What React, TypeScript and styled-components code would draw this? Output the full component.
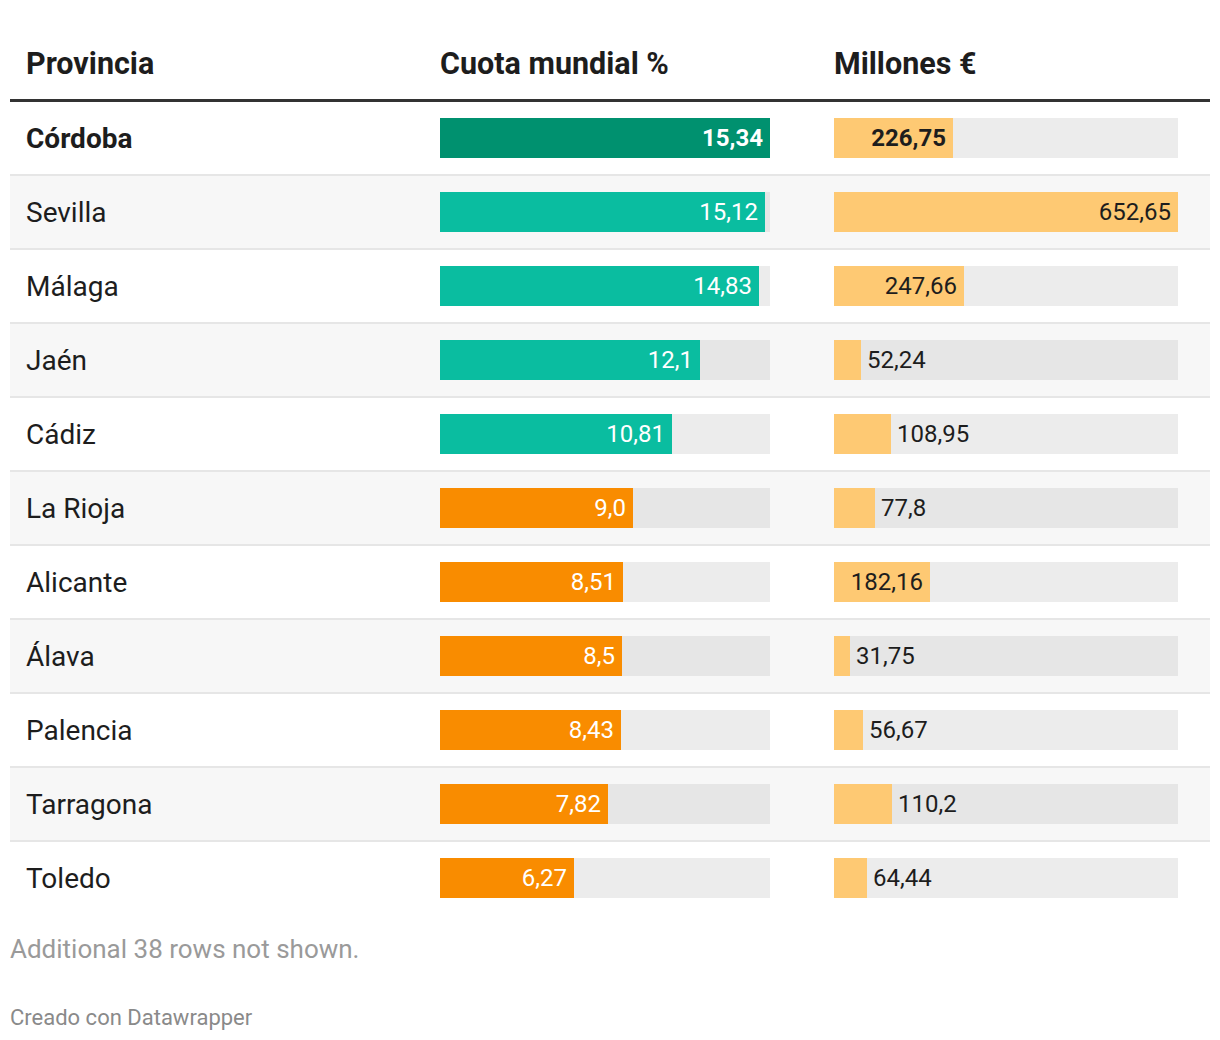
import React from "react";
import styled, { createGlobalStyle } from "styled-components";

const Global = createGlobalStyle`
  html, body { margin: 0; padding: 0; background: #fff; }
  body { font-family: Roboto, "Liberation Sans", sans-serif; color: #1d1d1d; }
`;

type Row = { name: string; cuota: number; mill: number; cl: string; ml: string; hl?: boolean };

const rows: Row[] = [
  { name: "Córdoba", cuota: 15.34, mill: 226.75, cl: "15,34", ml: "226,75", hl: true },
  { name: "Sevilla", cuota: 15.12, mill: 652.65, cl: "15,12", ml: "652,65" },
  { name: "Málaga", cuota: 14.83, mill: 247.66, cl: "14,83", ml: "247,66" },
  { name: "Jaén", cuota: 12.1, mill: 52.24, cl: "12,1", ml: "52,24" },
  { name: "Cádiz", cuota: 10.81, mill: 108.95, cl: "10,81", ml: "108,95" },
  { name: "La Rioja", cuota: 9.0, mill: 77.8, cl: "9,0", ml: "77,8" },
  { name: "Alicante", cuota: 8.51, mill: 182.16, cl: "8,51", ml: "182,16" },
  { name: "Álava", cuota: 8.5, mill: 31.75, cl: "8,5", ml: "31,75" },
  { name: "Palencia", cuota: 8.43, mill: 56.67, cl: "8,43", ml: "56,67" },
  { name: "Tarragona", cuota: 7.82, mill: 110.2, cl: "7,82", ml: "110,2" },
  { name: "Toledo", cuota: 6.27, mill: 64.44, cl: "6,27", ml: "64,44" },
];

const Page = styled.div`
  padding: 30px 10px 0 10px;
  width: 1200px;
`;

const Table = styled.div`
  display: flex;
  flex-direction: column;
`;

const Grid = styled.div<{ $striped?: boolean; $last?: boolean }>`
  display: grid;
  grid-template-columns: 430px 394px 1fr;
  align-items: center;
  background: ${(p) => (p.$striped ? "#f7f7f7" : "#fff")};
  border-bottom: ${(p) => (p.$last ? "none" : "2px solid #e6e6e6")};
  padding: 16px 0;
`;

const HeaderRow = styled(Grid)`
  padding: 0;
  height: 69px;
  border-bottom: 3px solid #333;
  background: #fff;
`;

const HeadCell = styled.div<{ $first?: boolean }>`
  font-weight: 700;
  font-size: 30.5px;
  color: #1d1d1d;
  padding: 0 0 3px ${(p) => (p.$first ? "16px" : "0")};
`;

const NameCell = styled.div<{ $bold?: boolean }>`
  padding-left: 16px;
  font-size: 28px;
  font-weight: ${(p) => (p.$bold ? 700 : 400)};
  color: #1d1d1d;
`;

const Track = styled.div<{ $w: number; $bg: string }>`
  width: ${(p) => p.$w}px;
  height: 40px;
  background: ${(p) => p.$bg};
  display: flex;
  align-items: center;
`;

const Fill = styled.div<{ $color: string }>`
  height: 100%;
  background: ${(p) => p.$color};
  display: flex;
  align-items: center;
  justify-content: flex-end;
  flex: none;
`;

const Value = styled.span<{ $color: string; $bold?: boolean; $outside?: boolean }>`
  font-size: 24px;
  font-weight: ${(p) => (p.$bold ? 700 : 400)};
  color: ${(p) => p.$color};
  white-space: nowrap;
  padding: ${(p) => (p.$outside ? "0 0 0 6px" : "0 7px 0 0")};
  line-height: 40px;
`;

const Note = styled.div`
  margin-top: 20px;
  font-size: 26px;
  color: #9a9a9a;
`;

const Credit = styled.div`
  margin-top: 41px;
  font-size: 22px;
  color: #8a8a8a;
`;

const CUOTA_W = 330;
const MILL_W = 344;
const CUOTA_MAX = 15.34;
const MILL_MAX = 652.65;

function cuotaColor(r: Row) {
  if (r.hl) return "#00916f";
  if (r.cuota >= 10) return "#0abda0";
  return "#f98c00";
}

function Bar({
  value,
  max,
  width,
  color,
  label,
  textIn,
  bold,
  striped,
}: {
  value: number;
  max: number;
  width: number;
  color: string;
  label: string;
  textIn: string;
  bold?: boolean;
  striped?: boolean;
}) {
  const w = Math.floor((value / max) * width);
  const fits = w > label.length * 12 + 14;
  return (
    <Track $w={width} $bg={striped ? "#e6e6e6" : "#ececec"}>
      <Fill $color={color} style={{ width: w }}>
        {fits && (
          <Value $color={textIn} $bold={bold}>
            {label}
          </Value>
        )}
      </Fill>
      {!fits && (
        <Value $color="#1d1d1d" $bold={bold} $outside>
          {label}
        </Value>
      )}
    </Track>
  );
}

export default function App() {
  return (
    <>
      <Global />
      <Page>
        <Table>
          <HeaderRow>
            <HeadCell $first>Provincia</HeadCell>
            <HeadCell>Cuota mundial %</HeadCell>
            <HeadCell>Millones €</HeadCell>
          </HeaderRow>
          {rows.map((r, i) => {
            const striped = i % 2 === 1;
            return (
              <Grid key={r.name} $striped={striped} $last={i === rows.length - 1}>
                <NameCell $bold={r.hl}>{r.name}</NameCell>
                <Bar
                  value={r.cuota}
                  max={CUOTA_MAX}
                  width={CUOTA_W}
                  color={cuotaColor(r)}
                  label={r.cl}
                  textIn="#ffffff"
                  bold={r.hl}
                  striped={striped}
                />
                <Bar
                  value={r.mill}
                  max={MILL_MAX}
                  width={MILL_W}
                  color="#fec973"
                  label={r.ml}
                  textIn="#1d1d1d"
                  bold={r.hl}
                  striped={striped}
                />
              </Grid>
            );
          })}
        </Table>
        <Note>Additional 38 rows not shown.</Note>
        <Credit>Creado con Datawrapper</Credit>
      </Page>
    </>
  );
}
